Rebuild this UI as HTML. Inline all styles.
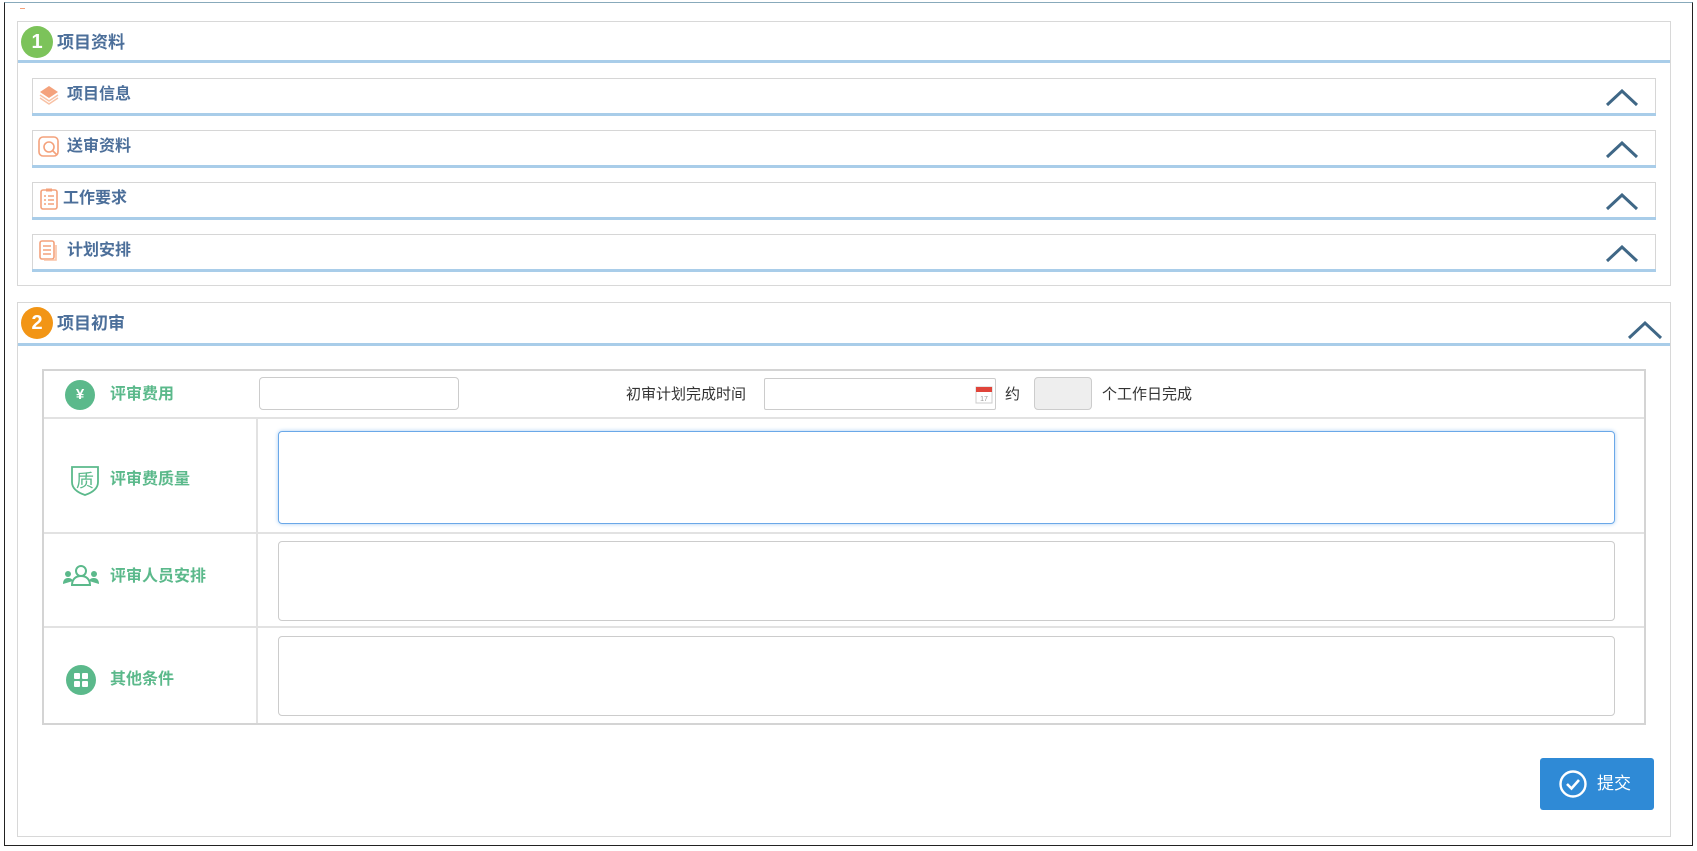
<!DOCTYPE html>
<html><head><meta charset="utf-8"><style>
*{box-sizing:border-box;margin:0;padding:0}
body{width:1697px;height:851px;background:#fff;position:relative;overflow:hidden;font-family:"Liberation Sans","Noto Sans CJK SC",sans-serif;line-height:1}
.abs{position:absolute}
.frame{left:4px;top:2px;width:1689px;height:844px;border:1px solid #222;border-top-color:#8ab}
.sec{border:1px solid #d8d8d8;background:#fff}
.bl{height:3px;background:#a9cde9}
.ttl{color:#4c6f9a;font-weight:bold;font-size:17px}
.sub{left:32px;width:1624px;height:38px;border:1px solid #d6d6d6;border-bottom:none}
.sub .line{position:absolute;left:-1px;right:-1px;bottom:0;height:3px;background:#a9cde9}
.sub .t{position:absolute;left:34px;top:8px;color:#4c6f9a;font-weight:bold;font-size:16px}
.sub svg.ic{position:absolute;left:4px;top:4px}
.sub svg.ch{position:absolute;right:16px;top:10px}
.g{color:#5bb98b;font-weight:bold;font-size:16px}
.inp{border:1px solid #ccc;border-radius:4px;background:#fff}
.txt{font-size:14px;color:#333}
</style></head><body>
<div class="abs frame"></div>
<div class="abs" style="left:20px;top:8px;width:5px;height:1px;background:#f4a27c"></div>

<!-- section 1 -->
<div class="abs sec" style="left:17px;top:21px;width:1654px;height:265px"></div>
<div class="abs bl" style="left:18px;top:60px;width:1652px"></div>
<div class="abs" style="left:21px;top:26px;width:32px;height:32px;border-radius:50%;background:#7cc35a;color:#fff;font-size:20px;font-weight:bold;text-align:center;line-height:32px">1</div>
<div class="abs ttl" style="left:57px;top:34px">项目资料</div>

<div class="abs sub" style="top:78px"><svg class="ic" width="24" height="24" viewBox="0 0 24 24"><path d="M12 3 21 9 12 15 3 9Z" fill="#f4a27c"/><path d="M3 12l9 6 9-6M3 15l9 6 9-6" fill="none" stroke="#f8c2a5" stroke-width="1.5"/></svg><span class="t">项目信息</span><svg class="ch" width="34" height="18"><path d="M2 16 17 2 32 16" fill="none" stroke="#3f6786" stroke-width="3"/></svg><div class="line"></div></div>
<div class="abs sub" style="top:130px"><svg class="ic" width="24" height="24" viewBox="0 0 24 24"><rect x="2" y="2" width="19" height="19" rx="4" fill="none" stroke="#f4a27c" stroke-width="1.6"/><circle cx="12" cy="12" r="5" fill="none" stroke="#f4a27c" stroke-width="1.6"/><path d="M15 15l5 5" stroke="#f4a27c" stroke-width="1.6"/></svg><span class="t">送审资料</span><svg class="ch" width="34" height="18"><path d="M2 16 17 2 32 16" fill="none" stroke="#3f6786" stroke-width="3"/></svg><div class="line"></div></div>
<div class="abs sub" style="top:182px"><svg class="ic" width="24" height="24" viewBox="0 0 24 24"><rect x="4" y="3" width="16" height="19" rx="2" fill="none" stroke="#f4a27c" stroke-width="1.6"/><rect x="9" y="1.5" width="6" height="3" fill="#f4a27c"/><path d="M7 9h2M11 9h6M7 13h2M11 13h6M7 17h2M11 17h6" stroke="#f4a27c" stroke-width="1.4"/></svg><span class="t" style="left:30px">工作要求</span><svg class="ch" width="34" height="18"><path d="M2 16 17 2 32 16" fill="none" stroke="#3f6786" stroke-width="3"/></svg><div class="line"></div></div>
<div class="abs sub" style="top:234px"><svg class="ic" width="24" height="24" viewBox="0 0 24 24"><rect x="3" y="2" width="14" height="18" rx="2" fill="none" stroke="#f4a27c" stroke-width="1.6"/><path d="M19 6v15H7" fill="none" stroke="#f8c2a5" stroke-width="1.6"/><path d="M6 7h8M6 11h8M6 15h8" stroke="#f4a27c" stroke-width="1.4"/></svg><span class="t">计划安排</span><svg class="ch" width="34" height="18"><path d="M2 16 17 2 32 16" fill="none" stroke="#3f6786" stroke-width="3"/></svg><div class="line"></div></div>

<!-- section 2 -->
<div class="abs sec" style="left:17px;top:302px;width:1654px;height:535px"></div>
<div class="abs bl" style="left:18px;top:343px;width:1652px"></div>
<div class="abs" style="left:21px;top:307px;width:32px;height:32px;border-radius:50%;background:#f29515;color:#fff;font-size:20px;font-weight:bold;text-align:center;line-height:32px">2</div>
<div class="abs ttl" style="left:57px;top:315px">项目初审</div>
<svg class="abs" style="left:1627px;top:320px" width="36" height="20"><path d="M2 18 18 3 34 18" fill="none" stroke="#3f6786" stroke-width="3"/></svg>

<!-- table -->
<div class="abs" style="left:42px;top:369px;width:1604px;height:356px;border:2px solid #d4d4d4"></div>
<div class="abs" style="left:44px;top:417px;width:1600px;height:2px;background:#e2e2e2"></div>
<div class="abs" style="left:44px;top:532px;width:1600px;height:2px;background:#e2e2e2"></div>
<div class="abs" style="left:44px;top:626px;width:1600px;height:2px;background:#e2e2e2"></div>
<div class="abs" style="left:256px;top:419px;width:2px;height:304px;background:#e2e2e2"></div>

<div class="abs" style="left:65px;top:380px;width:30px;height:30px;border-radius:50%;background:#5bb98b;color:#fff;text-align:center;line-height:30px;font-size:15px;font-weight:bold">¥</div>
<div class="abs g" style="left:110px;top:387px">评审费用</div>
<div class="abs inp" style="left:259px;top:377px;width:200px;height:33px"></div>
<div class="abs txt" style="left:626px;top:387px;font-size:15px">初审计划完成时间</div>
<div class="abs inp" style="left:764px;top:378px;width:232px;height:32px;border-radius:2px"></div>
<svg class="abs" style="left:975px;top:384px" width="18" height="20"><rect x="1" y="3" width="16" height="16" fill="#fff" stroke="#ccc"/><rect x="1" y="3" width="16" height="5" fill="#e0443a"/><text x="9" y="17" font-size="7" text-anchor="middle" fill="#999" font-family="Liberation Sans">17</text></svg>
<div class="abs txt" style="left:1005px;top:387px;font-size:15px">约</div>
<div class="abs" style="left:1034px;top:377px;width:58px;height:33px;border:1px solid #ccc;border-radius:4px;background:#eee"></div>
<div class="abs txt" style="left:1102px;top:387px;font-size:15px">个工作日完成</div>

<svg class="abs" style="left:69px;top:463px" width="32" height="34" viewBox="0 0 32 34"><path d="M3 4h26v15c0 7-7 11-13 13C10 30 3 26 3 19Z" fill="none" stroke="#5bb98b" stroke-width="1.8"/><text x="16" y="24" font-size="18" text-anchor="middle" fill="#5bb98b" font-family="Noto Sans CJK SC">质</text></svg>
<div class="abs g" style="left:110px;top:472px">评审费质量</div>
<div class="abs" style="left:278px;top:431px;width:1337px;height:93px;border:1px solid #6aa8e8;border-radius:4px;box-shadow:0 0 4px #a8cdf3"></div>

<svg class="abs" style="left:62px;top:561px" width="38" height="32" viewBox="0 0 38 32"><circle cx="19" cy="10" r="5" fill="none" stroke="#5bb98b" stroke-width="2"/><path d="M10 24c0-6 4-9 9-9s9 3 9 9Z" fill="none" stroke="#5bb98b" stroke-width="2"/><circle cx="6" cy="13" r="3" fill="#5bb98b"/><circle cx="32" cy="13" r="3" fill="#5bb98b"/><path d="M1 23c0-4 2-6 5-6s4 1 5 3M37 23c0-4-2-6-5-6s-4 1-5 3" fill="#5bb98b"/></svg>
<div class="abs g" style="left:110px;top:569px">评审人员安排</div>
<div class="abs inp" style="left:278px;top:541px;width:1337px;height:80px"></div>

<div class="abs" style="left:66px;top:665px;width:30px;height:30px;border-radius:50%;background:#5bb98b"></div>
<div class="abs" style="left:74px;top:673px;width:6px;height:6px;background:#fff;border-radius:1px"></div>
<div class="abs" style="left:82px;top:673px;width:6px;height:6px;background:#fff;border-radius:1px"></div>
<div class="abs" style="left:74px;top:681px;width:6px;height:6px;background:#fff;border-radius:1px"></div>
<div class="abs" style="left:82px;top:681px;width:6px;height:6px;background:#fff;border-radius:1px"></div>
<div class="abs g" style="left:110px;top:672px">其他条件</div>
<div class="abs inp" style="left:278px;top:636px;width:1337px;height:80px"></div>

<div class="abs" style="left:1540px;top:758px;width:114px;height:52px;background:#2f8ad6;border-radius:3px"></div>
<svg class="abs" style="left:1558px;top:769px" width="30" height="30"><circle cx="15" cy="15" r="12.5" fill="none" stroke="#fff" stroke-width="2.4"/><path d="M9 15l4.5 4.5L21 11" fill="none" stroke="#fff" stroke-width="2.6"/></svg>
<div class="abs" style="left:1597px;top:775px;color:#fff;font-size:17px">提交</div>
</body></html>
